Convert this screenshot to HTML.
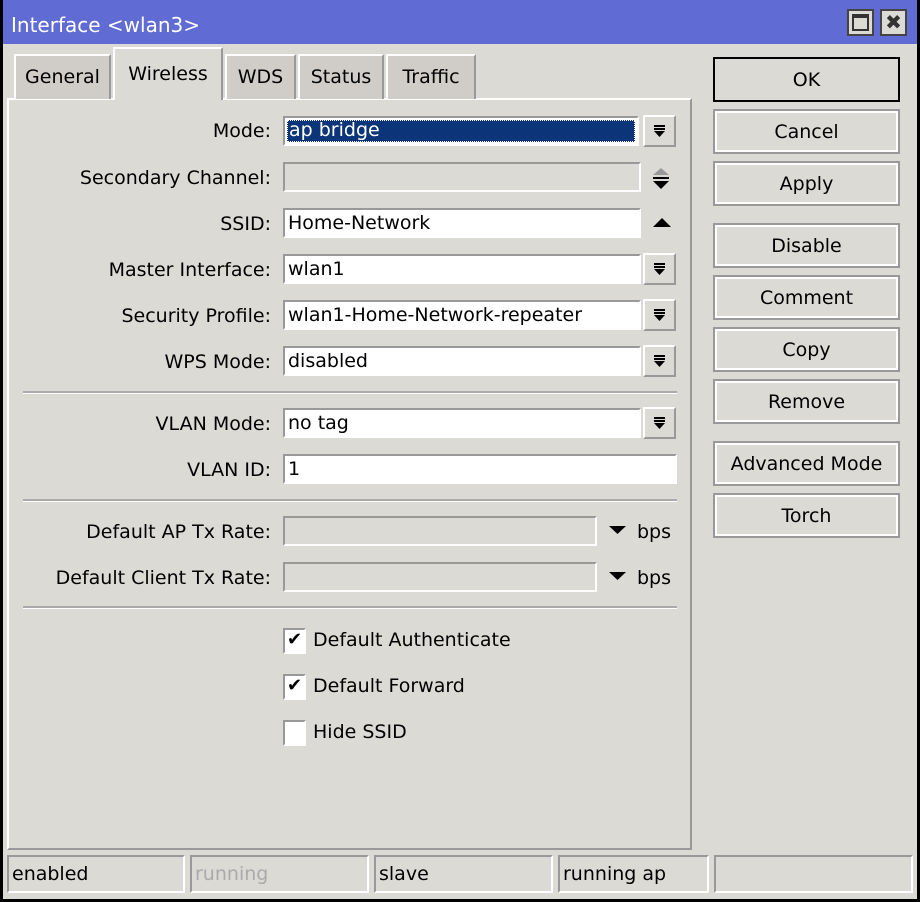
<!DOCTYPE html><html><head><style>
*{box-sizing:border-box;margin:0;padding:0}
body{width:920px;height:902px;background:#000;font-family:"DejaVu Sans","Liberation Sans",sans-serif;font-size:19px;color:#000;overflow:hidden;position:relative}
.win{position:absolute;left:3px;top:0;width:914px;height:899px;background:#dcdad5}
.title{position:absolute;left:0;top:0;width:914px;height:44px;background:#606bd4;color:#fff;font-size:20px;padding:13px 0 0 8px}
.tb{position:absolute;top:9px;width:27px;height:27px;background:#dcdad5;border:2px solid #444}
.a{position:absolute}
.tab{position:absolute;top:54px;height:45px;background:#d0cdc8;border:2px solid #fff;border-right-color:#999;border-bottom:none;text-align:center;padding-top:10px}
.panel{position:absolute;left:4px;top:98px;width:685px;height:752px;border:2px solid #fff;border-right-color:#999;border-bottom-color:#999}
.lbl{position:absolute;right:646px;text-align:right;white-space:nowrap}
.fld{position:absolute;left:280px;height:30px;background:#fff;border:2px solid #999;border-right-color:#fff;border-bottom-color:#fff;padding:2px 3px;white-space:nowrap}
.dis{background:#dcdad5}
.dd{position:absolute;left:640px;width:33px;height:32px;border:2px solid #999;border-left-color:#fff;border-top-color:#fff;background:#dcdad5}
.dd svg{position:absolute;left:0;top:0}
.sep{position:absolute;left:20px;width:654px;height:3px;border-top:2px solid #aaa;border-bottom:1px solid #fff}
.btn{position:absolute;left:710px;width:187px;height:45px;border:2px solid #999;outline:2px solid #fff;outline-offset:-4px;text-align:center;padding-top:10px}
.cb{position:absolute;left:280px;width:23px;height:26px;background:#fff;border:2px solid #999;border-bottom-color:#fff;border-right-color:#fff;font-size:18px;line-height:20px;text-align:center;font-weight:bold}
.st{position:absolute;top:855px;height:38px;border:2px solid #999;border-right-color:#fff;border-bottom-color:#fff;padding:6px 3px}
</style></head><body><div class="win">
<div class="title">Interface &lt;wlan3&gt;</div>
<div class="tb" style="left:844px"><div class="a" style="left:3px;top:3px;width:17px;height:17px;border:2px solid #333;border-top-width:4px"></div></div>
<div class="tb" style="left:877px;font-weight:bold;font-size:20px;text-align:center;line-height:22px;color:#333">✖</div>
<div class="panel"></div>
<div class="tab" style="left:11px;width:97px">General</div>
<div class="tab" style="left:110px;width:110px;top:47px;height:53px;background:#dcdad5;padding-top:14px">Wireless</div>
<div class="tab" style="left:222px;width:71px">WDS</div>
<div class="tab" style="left:295px;width:86px">Status</div>
<div class="tab" style="left:383px;width:90px">Traffic</div>

<div class="lbl" style="top:120px">Mode:</div>
<div class="fld" style="top:116px;width:356px;padding:2px"><div style="background:#0c3579;color:#fff;height:22px;border:1px dotted #fff;padding:0 1px;line-height:19px">ap bridge</div></div>
<div class="dd" style="top:115px"><svg width="29" height="28"><rect x="9" y="8" width="11" height="2"/><rect x="9" y="11" width="11" height="2"/><path d="M9 14h11l-5.5 6z"/></svg></div>

<div class="lbl" style="top:167px">Secondary Channel:</div>
<div class="fld dis" style="top:162px;width:358px"></div>
<svg class="a" style="left:646px;top:166px" width="24" height="26"><path d="M4 9l8-7 8 7z" fill="#999"/><rect x="4" y="11" width="16" height="2"/><path d="M4 15h16l-8 8z"/></svg>

<div class="lbl" style="top:213px">SSID:</div>
<div class="fld" style="top:208px;width:358px">Home-Network</div>
<svg class="a" style="left:648px;top:215px" width="22" height="14"><path d="M2 12l9-9 9 9z" fill="#000"/></svg>

<div class="lbl" style="top:259px">Master Interface:</div>
<div class="fld" style="top:254px;width:358px">wlan1</div>
<div class="dd" style="top:253px"><svg width="29" height="28"><rect x="9" y="8" width="11" height="2"/><rect x="9" y="11" width="11" height="2"/><path d="M9 14h11l-5.5 6z"/></svg></div>

<div class="lbl" style="top:305px">Security Profile:</div>
<div class="fld" style="top:300px;width:358px">wlan1-Home-Network-repeater</div>
<div class="dd" style="top:299px"><svg width="29" height="28"><rect x="9" y="8" width="11" height="2"/><rect x="9" y="11" width="11" height="2"/><path d="M9 14h11l-5.5 6z"/></svg></div>

<div class="lbl" style="top:351px">WPS Mode:</div>
<div class="fld" style="top:346px;width:358px">disabled</div>
<div class="dd" style="top:345px"><svg width="29" height="28"><rect x="9" y="8" width="11" height="2"/><rect x="9" y="11" width="11" height="2"/><path d="M9 14h11l-5.5 6z"/></svg></div>

<div class="sep" style="top:391px"></div>

<div class="lbl" style="top:413px">VLAN Mode:</div>
<div class="fld" style="top:408px;width:358px">no tag</div>
<div class="dd" style="top:407px"><svg width="29" height="28"><rect x="9" y="8" width="11" height="2"/><rect x="9" y="11" width="11" height="2"/><path d="M9 14h11l-5.5 6z"/></svg></div>

<div class="lbl" style="top:459px">VLAN ID:</div>
<div class="fld" style="top:454px;width:394px">1</div>

<div class="sep" style="top:499px"></div>

<div class="lbl" style="top:521px">Default AP Tx Rate:</div>
<div class="fld dis" style="top:516px;width:314px"></div>
<svg class="a" style="left:605px;top:524px" width="20" height="12"><path d="M1 2h17l-8.5 8z" fill="#000"/></svg>
<div class="a" style="left:634px;top:521px">bps</div>

<div class="lbl" style="top:567px">Default Client Tx Rate:</div>
<div class="fld dis" style="top:562px;width:314px"></div>
<svg class="a" style="left:605px;top:570px" width="20" height="12"><path d="M1 2h17l-8.5 8z" fill="#000"/></svg>
<div class="a" style="left:634px;top:567px">bps</div>

<div class="sep" style="top:606px"></div>

<div class="cb" style="top:628px">✔</div><div class="a" style="left:310px;top:629px">Default Authenticate</div>
<div class="cb" style="top:674px">✔</div><div class="a" style="left:310px;top:675px">Default Forward</div>
<div class="cb" style="top:720px"></div><div class="a" style="left:310px;top:721px">Hide SSID</div>

<div class="btn" style="top:57px;border-color:#000;outline-color:transparent">OK</div>
<div class="btn" style="top:109px">Cancel</div>
<div class="btn" style="top:161px">Apply</div>
<div class="btn" style="top:223px">Disable</div>
<div class="btn" style="top:275px">Comment</div>
<div class="btn" style="top:327px">Copy</div>
<div class="btn" style="top:379px">Remove</div>
<div class="btn" style="top:441px">Advanced Mode</div>
<div class="btn" style="top:493px">Torch</div>

<div class="st" style="left:4px;width:178px">enabled</div>
<div class="st" style="left:187px;width:179px;color:#aaa">running</div>
<div class="st" style="left:371px;width:179px">slave</div>
<div class="st" style="left:555px;width:151px">running ap</div>
<div class="st" style="left:711px;width:199px"></div>
</div></body></html>
